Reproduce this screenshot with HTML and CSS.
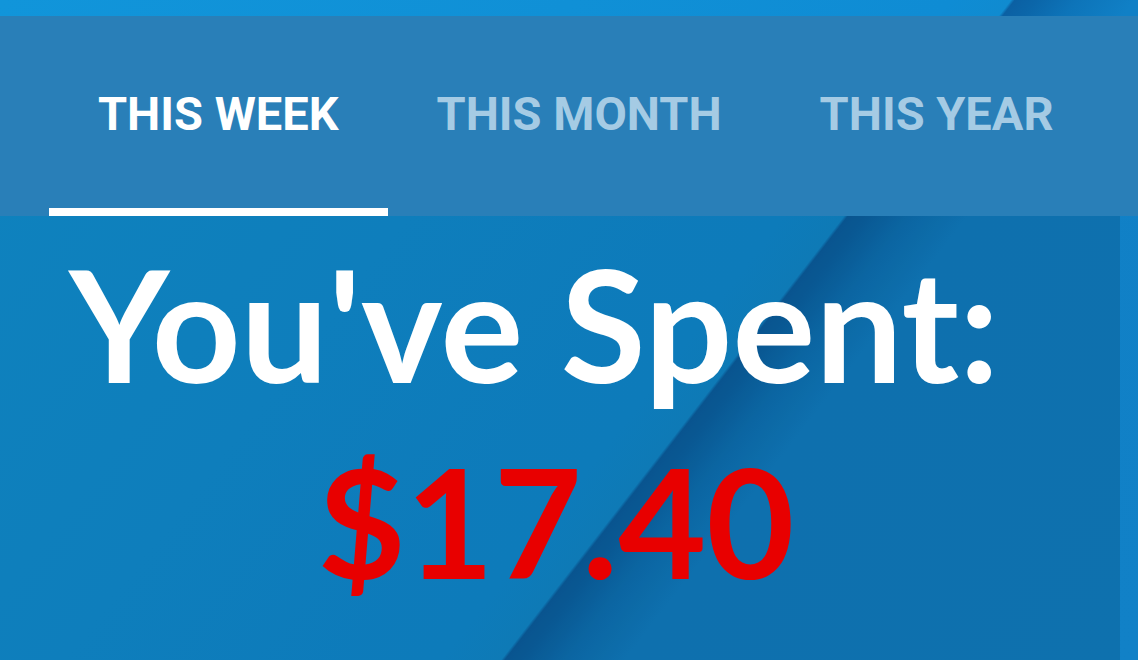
FILE: index.html
```
<!DOCTYPE html>
<html lang="en">
<head>
<meta charset="utf-8">
<meta name="viewport" content="width=device-width, initial-scale=1">
<title>Spending summary</title>
<link rel="stylesheet" href="styles.css">
</head>
<body class="page">
  <nav class="tabs" role="tablist" aria-label="Period">
    <button class="tab tab-active" id="tab-week" type="button" role="tab" aria-selected="true" aria-controls="summary">THIS WEEK</button>
    <button class="tab" type="button" role="tab" aria-selected="false" aria-controls="summary">THIS MONTH</button>
    <button class="tab" type="button" role="tab" aria-selected="false" aria-controls="summary">THIS YEAR</button>
  </nav>
  <main class="summary" id="summary" role="tabpanel" aria-labelledby="tab-week">
    <h1 class="summary-label">You've Spent:</h1>
    <p class="summary-amount">$17.40</p>
  </main>
</body>
</html>
```
FILE: styles.css
```
* {
  box-sizing: border-box;
}

.page {
  display: flex;
  flex-direction: column;
  min-height: 100vh;
  margin: 0;
  padding-top: 16px;
  overflow-x: hidden;
  background: linear-gradient(
    127.7deg,
    #1195da 0,
    #1090d6 calc(50% - 200px),
    #0f8cd4 calc(50% + 100px),
    #108bd0 calc(50% + 148px),
    #0b60a3 calc(50% + 151px),
    #0b66a9 calc(50% + 168px),
    #0d74b9 calc(50% + 200px),
    #1080c6 calc(50% + 246px),
    #1181c7 100%
  );
}

.tabs {
  display: flex;
  flex: none;
  height: 200px;
  padding-left: 49px;
  background: #297fb8;
}

.tab {
  flex: none;
  padding: 4px 49px 0;
  border: 0;
  border-bottom: 8px solid transparent;
  background: none;
  color: #a5cbe4;
  font: 700 47px/56px Roboto, sans-serif;
  white-space: nowrap;
  cursor: pointer;
}

.tab-active {
  border-bottom-color: #fff;
  color: #fff;
}

.summary {
  flex: 1;
  margin-right: 18px;
  padding-top: 9px;
  background: rgba(0, 0, 0, 0.12);
  font-family: Lato, sans-serif;
  font-size: 155px;
  font-weight: 700;
  line-height: 197px;
  text-align: center;
  white-space: nowrap;
}

.summary-label {
  margin: 0;
  padding-right: 52px;
  color: #fff;
  font: inherit;
}

.summary-amount {
  margin: 0;
  padding-right: 8px;
  color: #e80000;
  font-size: 152px;
}
```
